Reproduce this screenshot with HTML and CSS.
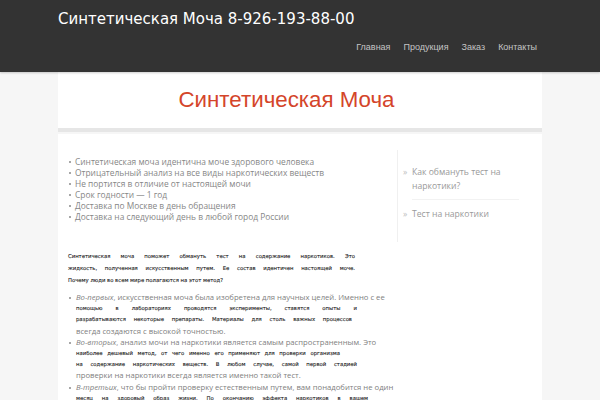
FILE: index.html
```html
<!DOCTYPE html>
<html lang="ru">
<head>
<meta charset="utf-8">
<title>Синтетическая Моча</title>
<link rel="stylesheet" href="styles.css">
</head>
<body>
<header class="top">
  <div class="wrap">
    <div class="brand">Синтетическая Моча 8-926-193-88-00</div>
    <nav class="menu">
      <a href="#">Главная</a>
      <a href="#">Продукция</a>
      <a href="#">Заказ</a>
      <a href="#">Контакты</a>
    </nav>
  </div>
</header>
<div class="page">
  <div class="title-box"><h1>Синтетическая Моча</h1></div>
  <div class="content">
    <main class="main">
      <ul class="features">
        <li>Синтетическая моча идентична моче здорового человека</li>
        <li>Отрицательный анализ на все виды наркотических веществ</li>
        <li>Не портится в отличие от настоящей мочи</li>
        <li>Срок годности — 1 год</li>
        <li>Доставка по Москве в день обращения</li>
        <li>Доставка на следующий день в любой город России</li>
      </ul>
      <div class="intro">
        <div class="ln jl">Синтетическая моча поможет обмануть тест на содержание наркотиков. Это</div>
        <div class="ln jl">жидкость, полученная искусственным путем. Ее состав идентичен настоящей моче.</div>
        <div class="ln">Почему люди во всем мире полагаются на этот метод?</div>
      </div>
      <ul class="reasons">
        <li>
          <div class="ln g"><i>Во-первых</i>, искусственная моча была изобретена для научных целей. Именно с ее</div>
          <div class="ln d jl w1">помощью в лабораториях проводятся эксперименты, ставятся опыты и</div>
          <div class="ln d jl w2">разрабатываются некоторые препараты. Материалы для столь важных процессов</div>
          <div class="ln g">всегда создаются с высокой точностью.</div>
        </li>
        <li>
          <div class="ln g"><i>Во-вторых</i>, анализ мочи на наркотики является самым распространенным. Это</div>
          <div class="ln d jl w3">наиболее дешевый метод, от чего именно его применяют для проверки организма</div>
          <div class="ln d jl w1">на содержание наркотических веществ. В любом случае, самой первой стадией</div>
          <div class="ln g">проверки на наркотики всегда является именно такой тест.</div>
        </li>
        <li>
          <div class="ln g"><i>В-третьих</i>, что бы пройти проверку естественным путем, вам понадобится не один</div>
          <div class="ln d jl w4">месяц на здоровый образ жизни. По окончанию эффекта наркотиков в вашем</div>
        </li>
      </ul>
    </main>
    <aside class="side">
      <ul class="links">
        <li class="first"><a href="#">Как обмануть тест на наркотики?</a></li>
        <li><a href="#">Тест на наркотики</a></li>
      </ul>
    </aside>
  </div>
</div>
</body>
</html>
```

FILE: styles.css
```css
html, body {
  margin: 0;
  padding: 0;
}
body {
  background: #f6f6f6;
  font-family: "Open Sans", "Noto Sans", sans-serif;
  height: 400px;
  overflow: hidden;
}
a {
  text-decoration: none;
  color: inherit;
}
ul {
  list-style: none;
  margin: 0;
  padding: 0;
}
.top {
  background: #333333;
  height: 72px;
  box-shadow: 0 1px 2px rgba(0,0,0,0.2);
  position: relative;
  z-index: 1;
}
.wrap {
  width: 484px;
  margin: 0 auto;
  padding-top: 10px;
}
.brand {
  font-family: "DejaVu Sans", sans-serif;
  font-size: 15px;
  line-height: 18px;
  color: #ffffff;
}
.menu {
  display: flex;
  justify-content: flex-end;
  gap: 13px;
  padding-right: 5px;
  margin-top: 13px;
  font-family: "Liberation Sans", Arial, sans-serif;
  font-size: 9px;
  line-height: 12px;
  color: #c4c4c4;
}
.page {
  width: 484px;
  margin: 0 auto;
}
.title-box {
  background: #ffffff;
  height: 56px;
  display: flex;
  align-items: center;
  justify-content: center;
  padding-right: 27px;
  border-bottom: 4px solid #e6e6e6;
}
.title-box h1 {
  margin: 0;
  font-family: "Liberation Sans", Arial, sans-serif;
  font-weight: normal;
  font-size: 22.3px;
  line-height: 26px;
  color: #d4452a;
}
.content {
  margin-top: 2px;
  background: #ffffff;
  display: flex;
  gap: 10px;
  padding-left: 10px;
  height: 300px;
}
.main {
  width: 319px;
  flex: none;
  padding-top: 22px;
}
.features {
  font-size: 8.4px;
  line-height: 11px;
  color: #868686;
}
.features li,
.reasons li {
  position: relative;
  padding-left: 7px;
}
.features li::before,
.reasons li::before {
  content: "";
  position: absolute;
  left: 1px;
  top: 5px;
  width: 2px;
  height: 2px;
  background: #8a8a8a;
  border-radius: 1px;
}
.intro {
  padding-top: 28px;
  width: 287px;
  font-family: "DejaVu Sans", sans-serif;
  font-size: 5.3px;
  line-height: 12px;
  color: #1e1e1e;
  -webkit-text-stroke: 0.1px #1e1e1e;
}
.ln {
  white-space: nowrap;
}
.jl {
  text-align: justify;
  text-align-last: justify;
}
.reasons {
  padding-top: 6px;
  line-height: 11.2px;
}
.reasons li {
  padding-left: 8px;
}
.g {
  font-size: 7.7px;
  color: #808080;
}
.g i {
  font-style: italic;
}
.d {
  font-family: "DejaVu Sans", sans-serif;
  font-size: 5.3px;
  color: #1e1e1e;
  -webkit-text-stroke: 0.1px #1e1e1e;
}
.w1 { width: 281px; }
.w2 { width: 276px; }
.w3 { width: 264px; }
.w4 { width: 292px; }
.side {
  width: 145px;
  flex: none;
  margin-top: 16px;
  height: 92px;
  border-left: 1px solid #f0f0f0;
}
.links {
  padding: 15px 24px 0 5px;
  font-size: 8.6px;
  line-height: 14px;
  color: #9a9a9a;
}
.links li {
  position: relative;
  padding-left: 9px;
}
.links li + li {
  margin-top: 7px;
}
.links .first {
  padding-bottom: 7px;
}
.links .first::after {
  content: "";
  position: absolute;
  left: 9px;
  right: 0;
  bottom: 0;
  border-bottom: 1px solid #f2f2f2;
}
.links li::before {
  content: "»";
  position: absolute;
  left: 0;
  top: 0;
  color: #c0c0c0;
}
```
